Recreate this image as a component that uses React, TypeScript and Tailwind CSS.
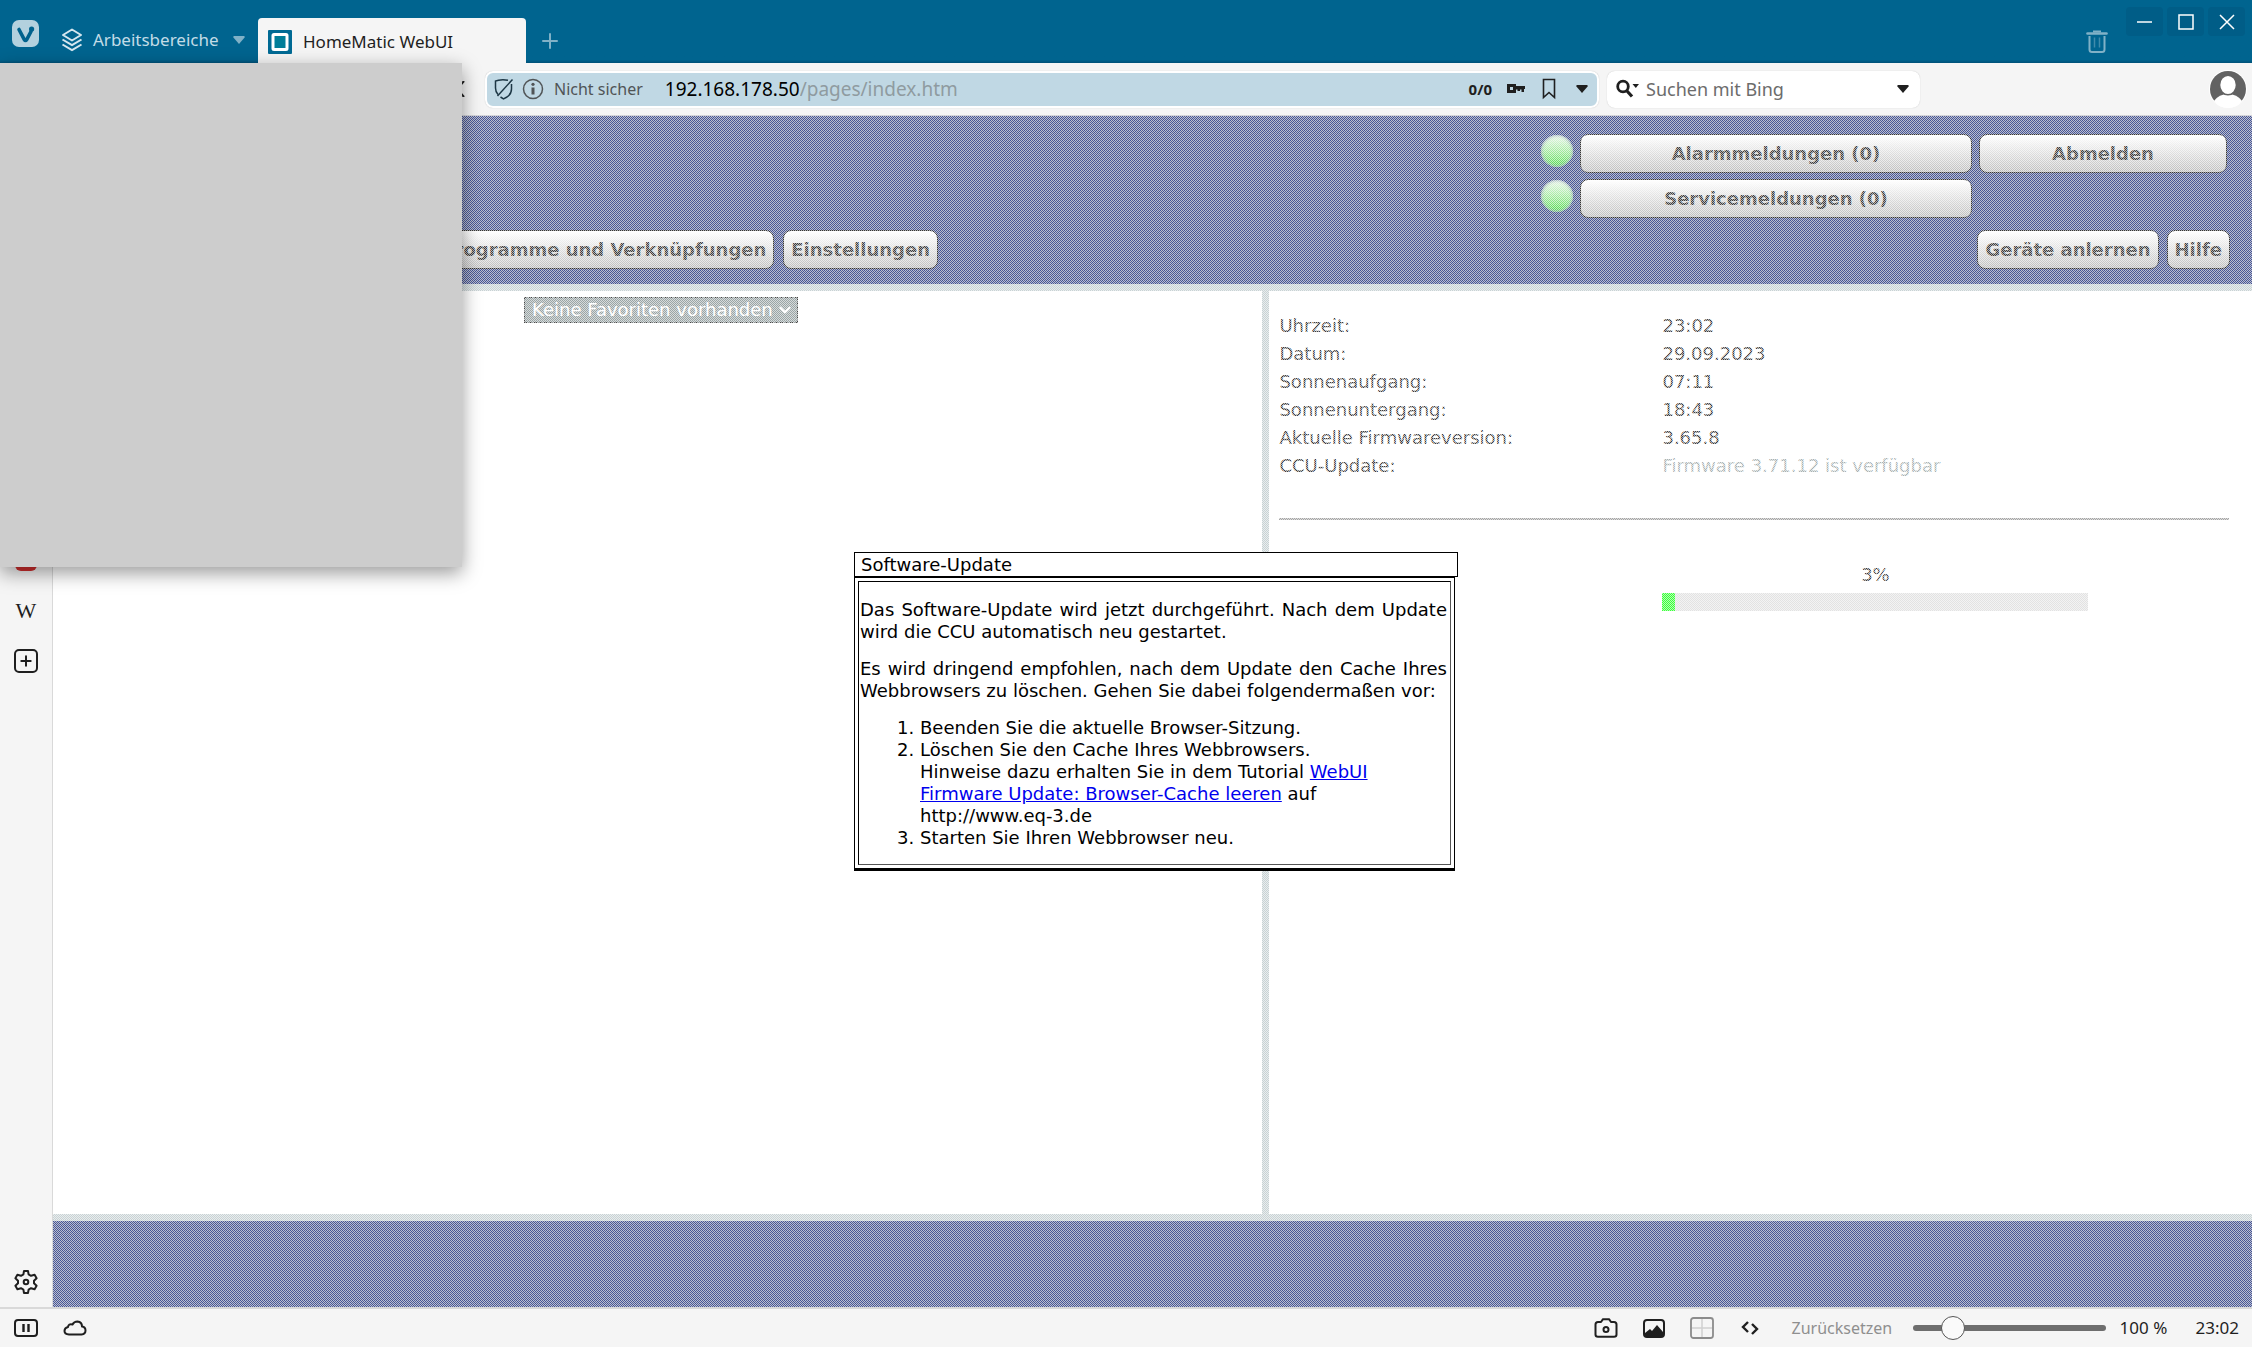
import { useState } from 'react';
import type { ReactNode } from 'react';
import { Plus, ChevronDown } from 'lucide-react';
import { clsx } from 'clsx';

// ─────────────────────────────────────────────────────────────────────────────
// HomeMatic WebUI in a Vivaldi window, firmware update in progress
// ─────────────────────────────────────────────────────────────────────────────

const UPDATE_PROGRESS = 3;

const SYSTEM_INFO = [
  { label: 'Uhrzeit:',                  value: '23:02' },
  { label: 'Datum:',                    value: '29.09.2023' },
  { label: 'Sonnenaufgang:',            value: '07:11' },
  { label: 'Sonnenuntergang:',          value: '18:43' },
  { label: 'Aktuelle Firmwareversion:', value: '3.65.8' },
  { label: 'CCU-Update:',               value: 'Firmware 3.71.12 ist verfügbar', muted: true },
];

// Fine two-tone weave used by the top and bottom bars
const BAR_TEXTURE = 'bg-[repeating-conic-gradient(#555f90_0_25%,#435394_0_50%)] bg-size-[4px_4px]';

// ── Icons ─────────────────────────────────────────────────────────────────────

function VivaldiIcon() {
  return (
    <svg width="28" height="28" viewBox="0 0 28 28">
      <rect x="0" y="0" width="27" height="27" rx="7" fill="#b3d1de" />
      <path d="M7 9.500l5.300 10q1.200 2 2.400 0L19 11.500" fill="none" stroke="#00628d" strokeWidth="3.600" strokeLinecap="round" />
      <circle cx="19.600" cy="9" r="2.600" fill="#00628d" />
    </svg>
  );
}

function LayersIcon() {
  return (
    <svg width="22" height="24" viewBox="0 0 22 24" fill="none" stroke="#d5e7ef" strokeWidth="2" strokeLinejoin="round">
      <path d="M11 1.500l9 5.500-9 5.500L2 7z" />
      <path d="M1.500 11.500l9.500 5.700 9.500-5.700" />
      <path d="M1.500 16.500l9.500 5.700 9.500-5.700" />
    </svg>
  );
}

function CaretIcon({ className }: { className?: string }) {
  return (
    <svg width="12" height="8" viewBox="0 0 12 8" className={clsx('shrink-0', className)}>
      <path d="M0 1l1-1h10l1 1-6 7z" fill="currentColor" />
    </svg>
  );
}

function FaviconIcon() {
  return (
    <svg width="24" height="24" viewBox="0 0 24 24" className="shrink-0">
      <rect width="24" height="24" rx="1" fill="#006a94" />
      <rect x="5" y="4.500" width="14" height="15" rx="1" fill="#007d98" stroke="#fff" strokeWidth="3" />
    </svg>
  );
}

function TrashIcon() {
  return (
    <svg width="22" height="24" viewBox="0 0 22 24" fill="none" stroke="#80b1c7">
      <path d="M1.500 3.500h19" strokeWidth="2.600" strokeLinecap="round" />
      <path d="M7 1.500h8" strokeWidth="2" />
      <path d="M3.500 6v13.500q0 2.500 2.500 2.500h10q2.500 0 2.500-2.500V6" strokeWidth="2" />
      <path d="M8.500 7.500v10M13.500 7.500v10" strokeWidth="1.500" opacity="0.5" />
    </svg>
  );
}

function ShieldOffIcon() {
  return (
    <svg width="20" height="22" viewBox="0 0 20 22" fill="none" stroke="#1c3644" strokeWidth="1.500" className="shrink-0">
      <path d="M14 2.300Q9 1.200 4.500 2.200L1.500 3v7q0 4 2.500 6.500M17.500 6v5q0 5-4.500 8l-3.500 1.800-3-1.800" />
      <path d="M18.500 1.500L3.500 18" />
    </svg>
  );
}

function InfoIcon() {
  return (
    <svg width="22" height="22" viewBox="0 0 22 22" fill="none" stroke="#505456" className="shrink-0">
      <circle cx="11" cy="11" r="9.500" strokeWidth="1.500" />
      <path d="M11 9.500v7" strokeWidth="3" />
      <circle cx="11" cy="6.300" r="1.600" fill="#505456" stroke="none" />
    </svg>
  );
}

function KeyIcon() {
  return (
    <svg width="20" height="12" viewBox="0 0 20 12" fill="#1f1f1f">
      <path fillRule="evenodd" d="M1 1h9v2h9v3h-1v3h-2.500V6.500H14V8h-2.500V6.500H10V10H1zM4 4v3h3V4z" />
    </svg>
  );
}

function BookmarkIcon() {
  return (
    <svg width="14" height="22" viewBox="0 0 14 22" fill="none" stroke="#1f1f1f" strokeWidth="1.600">
      <path d="M1.500 1.500h11v18L7 14.500l-5.500 5z" />
    </svg>
  );
}

function SearchIcon() {
  return (
    <svg width="24" height="20" viewBox="0 0 24 20" fill="none" stroke="#1f1f1f" className="shrink-0">
      <circle cx="7" cy="7.500" r="5.300" strokeWidth="2.800" />
      <path d="M11 12l5 5.500" strokeWidth="3.200" />
      <path d="M16.500 5h6.500l-3.200 4z" fill="#1f1f1f" stroke="none" />
    </svg>
  );
}

function AvatarIcon() {
  return (
    <svg width="38" height="38" viewBox="0 0 38 38">
      <circle cx="19" cy="19" r="19" fill="#fff" />
      <circle cx="19" cy="19" r="18" fill="#626262" />
      <path d="M5 31q5-7 14-7t14 7q-5 7-14 7T5 31z" fill="#fff" />
      <ellipse cx="19" cy="15" rx="8.500" ry="9.800" fill="#fff" stroke="#626262" strokeWidth="1.600" />
    </svg>
  );
}

function GearIcon() {
  return (
    <svg width="24" height="24" viewBox="0 0 24 24" fill="none" stroke="#1f1f1f" strokeWidth="2" strokeLinejoin="round">
      <path d="M10 1h4l.6 3.400 2.400 1.400 3.600-1 2 3.400-2.600 2.500v2.600l2.600 2.500-2 3.400-3.600-1-2.400 1.400L14 23h-4l-.6-3.400L7 18.200l-3.600 1-2-3.400L4 13.300v-2.600L1.400 8.200l2-3.400 3.600 1 2.400-1.400z" />
      <circle cx="12" cy="12" r="2.300" />
    </svg>
  );
}

function CloudIcon() {
  return (
    <svg width="24" height="18" viewBox="0 0 24 18" fill="none" stroke="#1f1f1f" strokeWidth="2" strokeLinejoin="round">
      <path d="M6 15.500h12.500q4-.5 4-4t-3.500-4q0-4.500-4.500-5-3.500 0-5 3-4-1-4.500 2.500-3.500.8-3.500 4T6 15.500z" />
    </svg>
  );
}

function CameraIcon() {
  return (
    <svg width="24" height="20" viewBox="0 0 24 20" fill="none" stroke="#1f1f1f" strokeWidth="2" strokeLinejoin="round">
      <path d="M4 4h3l2-2.800h6L17 4h3q2.500 0 2.500 2.500v10q0 2.300-2.500 2.300H4q-2.500 0-2.500-2.300v-10Q1.500 4 4 4z" />
      <circle cx="12" cy="11.500" r="2.500" />
    </svg>
  );
}

// ── Browser chrome ────────────────────────────────────────────────────────────

function WindowButton({ label, children }: { label: string; children: ReactNode }) {
  return (
    <button aria-label={label} className="flex h-[29px] w-[37px] items-center justify-center rounded bg-[#005d87]">
      <svg width="16" height="16" viewBox="0 0 16 16" fill="none" stroke="#fff" strokeWidth="1.500">
        {children}
      </svg>
    </button>
  );
}

function TitleBar() {
  return (
    <header className="flex h-[63px] shrink-0 items-end bg-linear-to-b from-[#00648f] from-95% to-[#005178]">
      <div className="flex w-[258px] items-center self-stretch pl-3 pt-1">
        <button aria-label="Vivaldi" className="pr-[21px]">
          <VivaldiIcon />
        </button>
        <button className="mt-3 flex items-center gap-[10px] text-[17px] text-[#c3dce7]">
          <LayersIcon />
          Arbeitsbereiche
          <CaretIcon className="ml-1 text-[#80b1c7]" />
        </button>
      </div>
      <div className="flex h-[45px] w-[268px] items-center gap-[11px] rounded-t bg-[#f5f5f5] px-[10px] pt-0.5 text-[17px] text-[#1f1f1f]">
        <FaviconIcon />
        HomeMatic WebUI
      </div>
      <button aria-label="Neuer Tab" className="flex h-[45px] w-12 items-center justify-center text-[#80b1c7]">
        <Plus size={24} strokeWidth={2} />
      </button>
      <button aria-label="Geschlossene Tabs" className="mb-[9px] ml-auto mr-[18px]">
        <TrashIcon />
      </button>
      <div className="flex gap-1 self-start pr-[7px] pt-[7px]">
        <WindowButton label="Minimieren"><path d="M0 8h15" /></WindowButton>
        <WindowButton label="Maximieren"><path d="M1 1h14v14H1z" /></WindowButton>
        <WindowButton label="Schließen"><path d="M1 1l14 14M15 1L1 15" /></WindowButton>
      </div>
    </header>
  );
}

function AddressBar() {
  return (
    <div className="flex h-[53px] shrink-0 items-center border-b border-[#d4d4d8] bg-[#f5f5f5] pl-[453px] pr-[5px]">
      <svg width="12" height="16" viewBox="0 0 12 16" className="mr-5 shrink-0" fill="none" stroke="#1f1f1f" strokeWidth="2">
        <path d="M11 0L4 8l7 8" />
      </svg>
      <div className="flex h-[37px] min-w-0 flex-1 items-center rounded-lg border-2 border-white bg-[#c0d8e4] px-[7px] shadow-[0_0_1px_#bbb]">
        <ShieldOffIcon />
        <span className="w-2" />
        <InfoIcon />
        <span className="ml-[10px] mr-[22px] whitespace-nowrap text-base text-[#505456]">Nicht sicher</span>
        <label htmlFor="url" className="text-[19px] text-black">192.168.178.50</label>
        <input id="url" defaultValue="/pages/index.htm" className="min-w-0 flex-1 bg-transparent text-[19px] text-[#8f9ba0] outline-none" />
        <span className="text-[15px] font-bold text-[#1f1f1f]">0/0</span>
        <button aria-label="Passwörter" className="ml-[14px]"><KeyIcon /></button>
        <button aria-label="Lesezeichen" className="ml-4"><BookmarkIcon /></button>
        <button aria-label="Verlauf" className="ml-5 mr-0.5 text-[#1f1f1f]"><CaretIcon /></button>
      </div>
      <div className="ml-2 flex h-[37px] w-[313px] shrink-0 items-center rounded-lg bg-white pl-[9px] pr-[11px] shadow-[0_0_1px_#bbb]">
        <SearchIcon />
        <input
          aria-label="Suche"
          placeholder="Suchen mit Bing"
          className="ml-1.5 min-w-0 flex-1 text-lg outline-none placeholder:text-[#6c6c6c]"
        />
        <button aria-label="Suchmaschine" className="text-[#1f1f1f]"><CaretIcon /></button>
      </div>
      <button aria-label="Profil" className="ml-[289px] shrink-0"><AvatarIcon /></button>
    </div>
  );
}

function Sidebar() {
  return (
    <aside className="flex w-[53px] shrink-0 flex-col items-center border-r border-[#d9d9d9] bg-[#f5f5f5] pb-[13px] pt-[431px]">
      <button aria-label="Webpanel" className="h-6 w-[22px] rounded-md bg-[#d32f2f]" />
      <button className="mt-7 h-6 font-['Liberation_Serif',serif] text-[22px] leading-6 text-[#1f1f1f]">W</button>
      <button aria-label="Webpanel hinzufügen" className="mt-[26px] flex h-6 w-6 items-center justify-center rounded-[5px] border-2 border-[#1f1f1f] text-[#1f1f1f]">
        <Plus size={16} strokeWidth={3} />
      </button>
      <button aria-label="Einstellungen öffnen" className="mt-auto"><GearIcon /></button>
    </aside>
  );
}

function StatusBar() {
  const [zoom, setZoom] = useState(100);

  return (
    <footer className="flex h-10 shrink-0 items-center border-t-2 border-[#d9d9d9] bg-[#f5f5f5] px-[13px] text-[17px] text-[#1f1f1f]">
      <button aria-label="Panel umschalten" className="mr-6">
        <svg width="26" height="20" viewBox="0 0 26 20" fill="none" stroke="#1f1f1f" strokeWidth="2">
          <rect x="2" y="2" width="22" height="16" rx="3" />
          <path d="M10.500 6v8M15.500 6v8" strokeWidth="2.400" />
        </svg>
      </button>
      <button aria-label="Synchronisierung"><CloudIcon /></button>
      <div className="ml-auto flex items-center">
        <button aria-label="Bildschirmfoto"><CameraIcon /></button>
        <button aria-label="Bilder" className="ml-[25px]">
          <svg width="22" height="19" viewBox="0 0 22 19">
            <rect x="1" y="1" width="20" height="17" rx="3" fill="none" stroke="#1f1f1f" strokeWidth="2" />
            <path d="M2 14l5-4 2 2 5-6 6 7v4H2z" fill="#1f1f1f" />
          </svg>
        </button>
        <button aria-label="Kacheln" className="ml-[25px]">
          <svg width="24" height="22" viewBox="0 0 24 22" fill="none">
            <path d="M12 2v18M2 11h20" stroke="#d0d0d0" strokeWidth="1.500" />
            <rect x="1" y="1" width="22" height="20" rx="2.500" stroke="#8c8c8c" strokeWidth="1.800" />
          </svg>
        </button>
        <button aria-label="Seitenaktionen" className="ml-[27px]">
          <svg width="18" height="16" viewBox="0 0 18 16" fill="none" stroke="#1f1f1f" strokeWidth="2.400">
            <path d="M7 2L2 7l5 5M11 4l5 5-5 5" />
          </svg>
        </button>
        <button onClick={() => setZoom(100)} className="ml-[33px] w-[105px] text-left text-base text-[#8f8f8f]">Zurücksetzen</button>
        <input
          type="range"
          aria-label="Zoom"
          min={20}
          max={500}
          value={zoom}
          onChange={e => setZoom(Number(e.target.value))}
          className="ml-4 h-6 w-[193px] appearance-none bg-transparent [&::-webkit-slider-runnable-track]:h-1.5 [&::-webkit-slider-runnable-track]:rounded-full [&::-webkit-slider-runnable-track]:bg-[#6e6e6e] [&::-webkit-slider-thumb]:-mt-[9px] [&::-webkit-slider-thumb]:size-6 [&::-webkit-slider-thumb]:appearance-none [&::-webkit-slider-thumb]:rounded-full [&::-webkit-slider-thumb]:border [&::-webkit-slider-thumb]:border-[#555] [&::-webkit-slider-thumb]:bg-[#fafafa]"
        />
        <span className="ml-[14px] w-[76px]">{zoom} %</span>
        <span>23:02</span>
      </div>
    </footer>
  );
}

// ── WebUI ─────────────────────────────────────────────────────────────────────

function MenuButton({ children }: { children: ReactNode }) {
  return (
    <button className="h-[39px] whitespace-nowrap rounded-lg border border-[#333] bg-linear-to-b from-white to-[#bdbdbd] px-[7px] text-lg font-bold text-[#3d3d3d]">
      {children}
    </button>
  );
}

function Led() {
  return <span className="mt-px h-8 w-8 rounded-full bg-linear-to-b from-[#eaf6ea] to-[#3ed83e] shadow-[inset_0_0_3px_1px_#8fa3b0]" />;
}

function WebUIHeader() {
  return (
    <header className={clsx('flex h-[175px] shrink-0 items-end justify-between border-b-[7px] border-[#c8d2d4] pb-[15px] pr-[22px]', BAR_TEXTURE)}>
      <nav className="flex w-[885px] justify-end gap-[9px]">
        <MenuButton>Programme und Verknüpfungen</MenuButton>
        <MenuButton>Einstellungen</MenuButton>
      </nav>
      <div className="flex flex-col items-end">
        <div className="grid grid-cols-[32px_392px_248px] items-start gap-x-[7px] gap-y-1.5 pr-[3px]">
          <Led />
          <MenuButton>Alarmmeldungen (0)</MenuButton>
          <MenuButton>Abmelden</MenuButton>
          <Led />
          <MenuButton>Servicemeldungen (0)</MenuButton>
        </div>
        <div className="mt-3 flex gap-2">
          <MenuButton>Geräte anlernen</MenuButton>
          <MenuButton>Hilfe</MenuButton>
        </div>
      </div>
    </header>
  );
}

function SystemPanel() {
  return (
    <section className="flex-1 border-l-[7px] border-[#c8d2d4] pl-[10px] pr-[23px] pt-[21px] text-[#3d3d3d]">
      <table className="w-full text-left">
        <tbody>
          {SYSTEM_INFO.map(row => (
            <tr key={row.label} className="h-7 leading-7">
              <th scope="row" className="w-[383px] p-0 font-normal">{row.label}</th>
              <td className={clsx('p-0', row.muted && 'text-[#a9b3b3]')}>{row.value}</td>
            </tr>
          ))}
        </tbody>
      </table>
      <hr className="mt-[38px] border-t-2 border-[#a5a5a5]" />
      <div className="ml-[383px] mt-[41px] w-[426px]">
        <p className="text-center leading-7">{UPDATE_PROGRESS}%</p>
        <div
          role="progressbar"
          aria-label="Update"
          aria-valuenow={UPDATE_PROGRESS}
          className="mt-1 h-[18px] bg-[#e2e2e2]"
        >
          <div className="h-full bg-[#3cff3c]" style={{ width: `${UPDATE_PROGRESS}%` }} />
        </div>
      </div>
    </section>
  );
}

function UpdateDialog() {
  return (
    <div role="dialog" aria-labelledby="dialog-title" className="relative w-[604px] leading-[22px] text-black">
      <h2 id="dialog-title" className="border border-black bg-white pl-1.5 pt-px">Software-Update</h2>
      <div className="mr-[3px] border border-b-[3px] border-black bg-white p-[3px]">
        <div className="border border-b-[#555] border-l-black border-r-[#555] border-t-black pb-[15px] pl-px pr-[3px] pt-[17px]">
          <p className="mb-[15px] text-justify">
            Das Software-Update wird jetzt durchgeführt. Nach dem Update wird die CCU automatisch neu gestartet.
          </p>
          <p className="mb-[15px] text-justify">
            Es wird dringend empfohlen, nach dem Update den Cache Ihres Webbrowsers zu löschen. Gehen Sie dabei folgendermaßen vor:
          </p>
          <ol className="list-decimal pl-[60px] pr-16">
            <li>Beenden Sie die aktuelle Browser-Sitzung.</li>
            <li>
              Löschen Sie den Cache Ihres Webbrowsers.
              <br />
              Hinweise dazu erhalten Sie in dem Tutorial{' '}
              <a href="http://www.eq-3.de" className="text-[#0000ee] underline">
                WebUI Firmware Update: Browser-Cache leeren
              </a>{' '}
              auf http://www.eq-3.de
            </li>
            <li>Starten Sie Ihren Webbrowser neu.</li>
          </ol>
        </div>
      </div>
    </div>
  );
}

// One-pixel checkerboard that greys out the page behind a dialog
function Checkerboard() {
  return (
    <svg className="absolute inset-0 size-full" shapeRendering="crispEdges" aria-hidden="true">
      <defs>
        <pattern id="checker" width="2" height="2" patternUnits="userSpaceOnUse">
          <rect x="0" y="0" width="1" height="1" fill="#fff" fillOpacity="0.6" />
          <rect x="1" y="1" width="1" height="1" fill="#fff" fillOpacity="0.6" />
        </pattern>
      </defs>
      <rect width="100%" height="100%" fill="url(#checker)" />
    </svg>
  );
}

function WebUI() {
  return (
    <main className="relative flex min-w-0 flex-1 flex-col bg-white font-['Verdana','DejaVu_Sans',sans-serif] text-lg">
      <WebUIHeader />
      <div className="flex flex-1">
        <section className="w-[55%] pl-[471px] pt-1.5">
          <div className="relative w-[274px]">
            <select
              aria-label="Favoriten"
              className="block h-[26px] w-full appearance-none border border-dashed border-[#444] bg-[#9aa5a6] pl-[7px] text-lg leading-6 text-white"
            >
              <option>Keine Favoriten vorhanden</option>
            </select>
            <ChevronDown size={18} strokeWidth={3} className="pointer-events-none absolute right-1 top-1 text-white" />
          </div>
        </section>
        <SystemPanel />
      </div>
      <footer className={clsx('h-[93px] shrink-0 border-t-[7px] border-[#c8d2d4]', BAR_TEXTURE)} />

      <div className="absolute inset-0 flex items-center justify-center pl-[7px]">
        <Checkerboard />
        <UpdateDialog />
      </div>
    </main>
  );
}

// ── App ───────────────────────────────────────────────────────────────────────

export default function App() {
  return (
    <div className="relative flex min-h-screen flex-col overflow-hidden font-['Noto_Sans',sans-serif]">
      <TitleBar />
      <AddressBar />
      <div className="flex flex-1">
        <Sidebar />
        <WebUI />
      </div>
      <StatusBar />

      {/* Blank popup over the upper left corner */}
      <div className="absolute left-0 top-[63px] h-[504px] w-[462px] bg-[#cdcdcd] shadow-[0_6px_18px_rgba(0,0,0,0.4)]" />
    </div>
  );
}
